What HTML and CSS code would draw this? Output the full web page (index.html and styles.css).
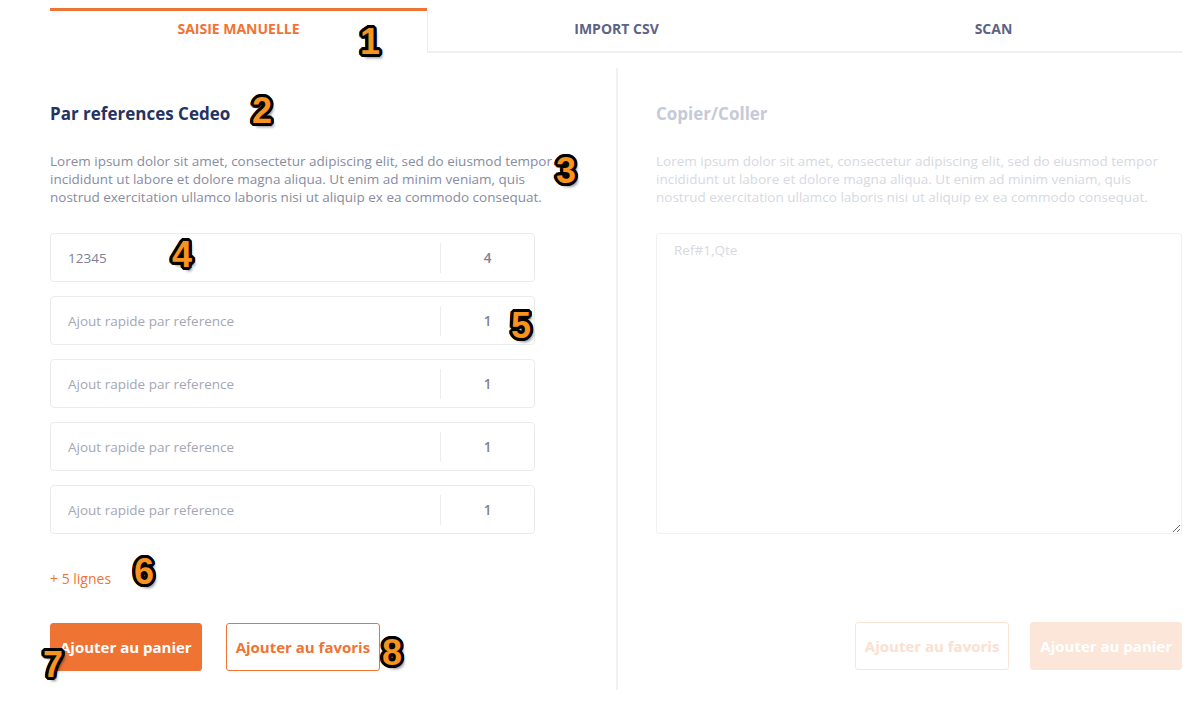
FILE: index.html
```html
<!DOCTYPE html>
<html lang="fr">
<head>
<meta charset="utf-8">
<title>Ajout rapide</title>
<link rel="stylesheet" href="styles.css">
</head>
<body>
<div class="page">
  <nav class="tabs">
    <div class="tab active">Saisie manuelle</div>
    <div class="tab">Import CSV</div>
    <div class="tab">Scan</div>
  </nav>

  <div class="content">
    <section class="col col-left">
      <h2 class="title">Par references Cedeo</h2>
      <p class="desc">Lorem ipsum dolor sit amet, consectetur adipiscing elit, sed do eiusmod tempor<br>incididunt ut labore et dolore magna aliqua. Ut enim ad minim veniam, quis<br>nostrud exercitation ullamco laboris nisi ut aliquip ex ea commodo consequat.</p>
      <div class="refs">
        <div class="ref-row"><input class="ref-input" value="12345"><span class="sep"></span><input class="qty-input" value="4"></div>
        <div class="ref-row"><input class="ref-input" placeholder="Ajout rapide par reference"><span class="sep"></span><input class="qty-input" value="1"></div>
        <div class="ref-row"><input class="ref-input" placeholder="Ajout rapide par reference"><span class="sep"></span><input class="qty-input" value="1"></div>
        <div class="ref-row"><input class="ref-input" placeholder="Ajout rapide par reference"><span class="sep"></span><input class="qty-input" value="1"></div>
        <div class="ref-row"><input class="ref-input" placeholder="Ajout rapide par reference"><span class="sep"></span><input class="qty-input" value="1"></div>
      </div>
      <a class="more" href="#">+ 5 lignes</a>
      <div class="actions">
        <button class="btn btn-primary">Ajouter au panier</button>
        <button class="btn btn-outline">Ajouter au favoris</button>
      </div>
    </section>

    <section class="col col-right">
      <h2 class="title">Copier/Coller</h2>
      <p class="desc">Lorem ipsum dolor sit amet, consectetur adipiscing elit, sed do eiusmod tempor<br>incididunt ut labore et dolore magna aliqua. Ut enim ad minim veniam, quis<br>nostrud exercitation ullamco laboris nisi ut aliquip ex ea commodo consequat.</p>
      <textarea class="paste" placeholder="Ref#1,Qte"></textarea>
      <div class="actions actions-right">
        <button class="btn btn-outline">Ajouter au favoris</button>
        <button class="btn btn-primary">Ajouter au panier</button>
      </div>
    </section>
  </div>

  <span class="badge b1">1</span>
  <span class="badge b2">2</span>
  <span class="badge b3">3</span>
  <span class="badge b4">4</span>
  <span class="badge b5">5</span>
  <span class="badge b6">6</span>
  <span class="badge b7">7</span>
  <span class="badge b8">8</span>
</div>
</body>
</html>
```

FILE: styles.css
```css
* { box-sizing: border-box; }

html, body {
  margin: 0;
  background: #ffffff;
}

body {
  font-family: "Open Sans", Lato, Arial, sans-serif;
  color: #2a3561;
}

.page {
  position: relative;
  width: 1204px;
  height: 704px;
  padding: 8px 22px 0 50px;
}

/* Tabs */
.tabs {
  display: flex;
  height: 45px;
}

.tab {
  flex: 1;
  text-align: center;
  text-transform: uppercase;
  font-weight: 700;
  font-size: 14px;
  line-height: 16px;
  padding-top: 10px;
  color: #5b6486;
  border-top: 3px solid transparent;
  border-bottom: 2px solid #f0f0f0;
}

.tab.active {
  color: #ef7434;
  border-top-color: #ef7434;
  border-bottom-color: transparent;
}

.tab.active + .tab {
  border-left: 1px solid #ececec;
}

/* Content */
.content {
  display: flex;
  margin-top: 15px;
  height: 622px;
}

.col {
  display: flex;
  flex-direction: column;
  padding-top: 35px;
}

.col-left {
  width: 568px;
  border-right: 2px solid #f1f1f1;
}

.col-right {
  flex: 1;
  padding-left: 38px;
}

.title {
  margin: 0;
  font-size: 17px;
  line-height: 22px;
  font-weight: 700;
  color: #26325f;
}

.desc {
  margin: 27px 0 0;
  font-size: 13.5px;
  line-height: 18px;
  color: #878ca1;
  white-space: nowrap;
}

.refs {
  display: flex;
  flex-direction: column;
  gap: 14px;
  margin-top: 27px;
  width: 485px;
}

.ref-row {
  display: flex;
  align-items: center;
  height: 49px;
  border: 1px solid #ebebeb;
  border-radius: 4px;
  background: #fff;
}

.ref-row input {
  border: 0;
  outline: 0;
  background: transparent;
  font-family: inherit;
  font-size: 13.5px;
  color: #7c8196;
  padding: 0;
}

.ref-row input::placeholder {
  color: #a3a7b6;
}

.ref-input {
  flex: 1;
  min-width: 0;
  padding-left: 17px !important;
}

.sep {
  width: 1px;
  height: 30px;
  background: #ededed;
}

.qty-input {
  width: 93px;
  text-align: center;
  font-weight: 600;
}

.more {
  margin-top: 36px;
  font-size: 14px;
  line-height: 18px;
  color: #ef7434;
  text-decoration: none;
  align-self: flex-start;
}

.actions {
  display: flex;
  gap: 24px;
  margin-top: 35px;
}

.btn {
  height: 48px;
  padding: 0 9px;
  font-family: inherit;
  font-size: 15px;
  font-weight: 700;
  border-radius: 3px;
  cursor: pointer;
}

.btn-primary {
  background: #ef7434;
  border: 1px solid #ef7434;
  color: #fff;
}

.btn-outline {
  background: #fff;
  border: 1px solid #ef7434;
  color: #ef7434;
}

/* Right (disabled) column */
.col-right .title { color: #c6cad8; }
.col-right .desc { color: #d6d9e2; }

.paste {
  margin-top: 27px;
  width: 526px;
  height: 301px;
  border: 1px solid #f1f1f1;
  border-radius: 3px;
  padding: 7px 17px;
  font-family: inherit;
  font-size: 13.5px;
  color: #7c8196;
  outline: 0;
}

.paste::placeholder { color: #d7d9e2; }

.actions-right {
  justify-content: flex-end;
  margin-top: 88px;
  gap: 21px;
}

.col-right .btn-primary {
  background: #fbe6d9;
  border-color: #fbe6d9;
}

.col-right .btn-outline {
  border-color: #fbe3d5;
  color: #fbe0cf;
}

/* Annotation badges */
.badge {
  position: absolute;
  transform: translate(-50%, -50%);
  font-family: "Liberation Sans", Arial, sans-serif;
  font-weight: 700;
  font-size: 36px;
  line-height: 1;
  color: #f7931e;
  text-shadow:
    3px 0 0 #000, -3px 0 0 #000, 0 3px 0 #000, 0 -3px 0 #000,
    2px 2px 0 #000, -2px 2px 0 #000, 2px -2px 0 #000, -2px -2px 0 #000,
    3px 1px 0 #000, -3px 1px 0 #000, 3px -1px 0 #000, -3px -1px 0 #000,
    1px 3px 0 #000, -1px 3px 0 #000, 1px -3px 0 #000, -1px -3px 0 #000,
    3px 4px 3px rgba(0,0,0,0.45);
}

.b1 { left: 370px; top: 42px; }
.b2 { left: 262px; top: 111px; }
.b3 { left: 566px; top: 171px; }
.b4 { left: 182px; top: 255px; }
.b5 { left: 521px; top: 326px; }
.b6 { left: 144px; top: 572px; }
.b7 { left: 53px; top: 665px; }
.b8 { left: 392px; top: 653px; }
```
